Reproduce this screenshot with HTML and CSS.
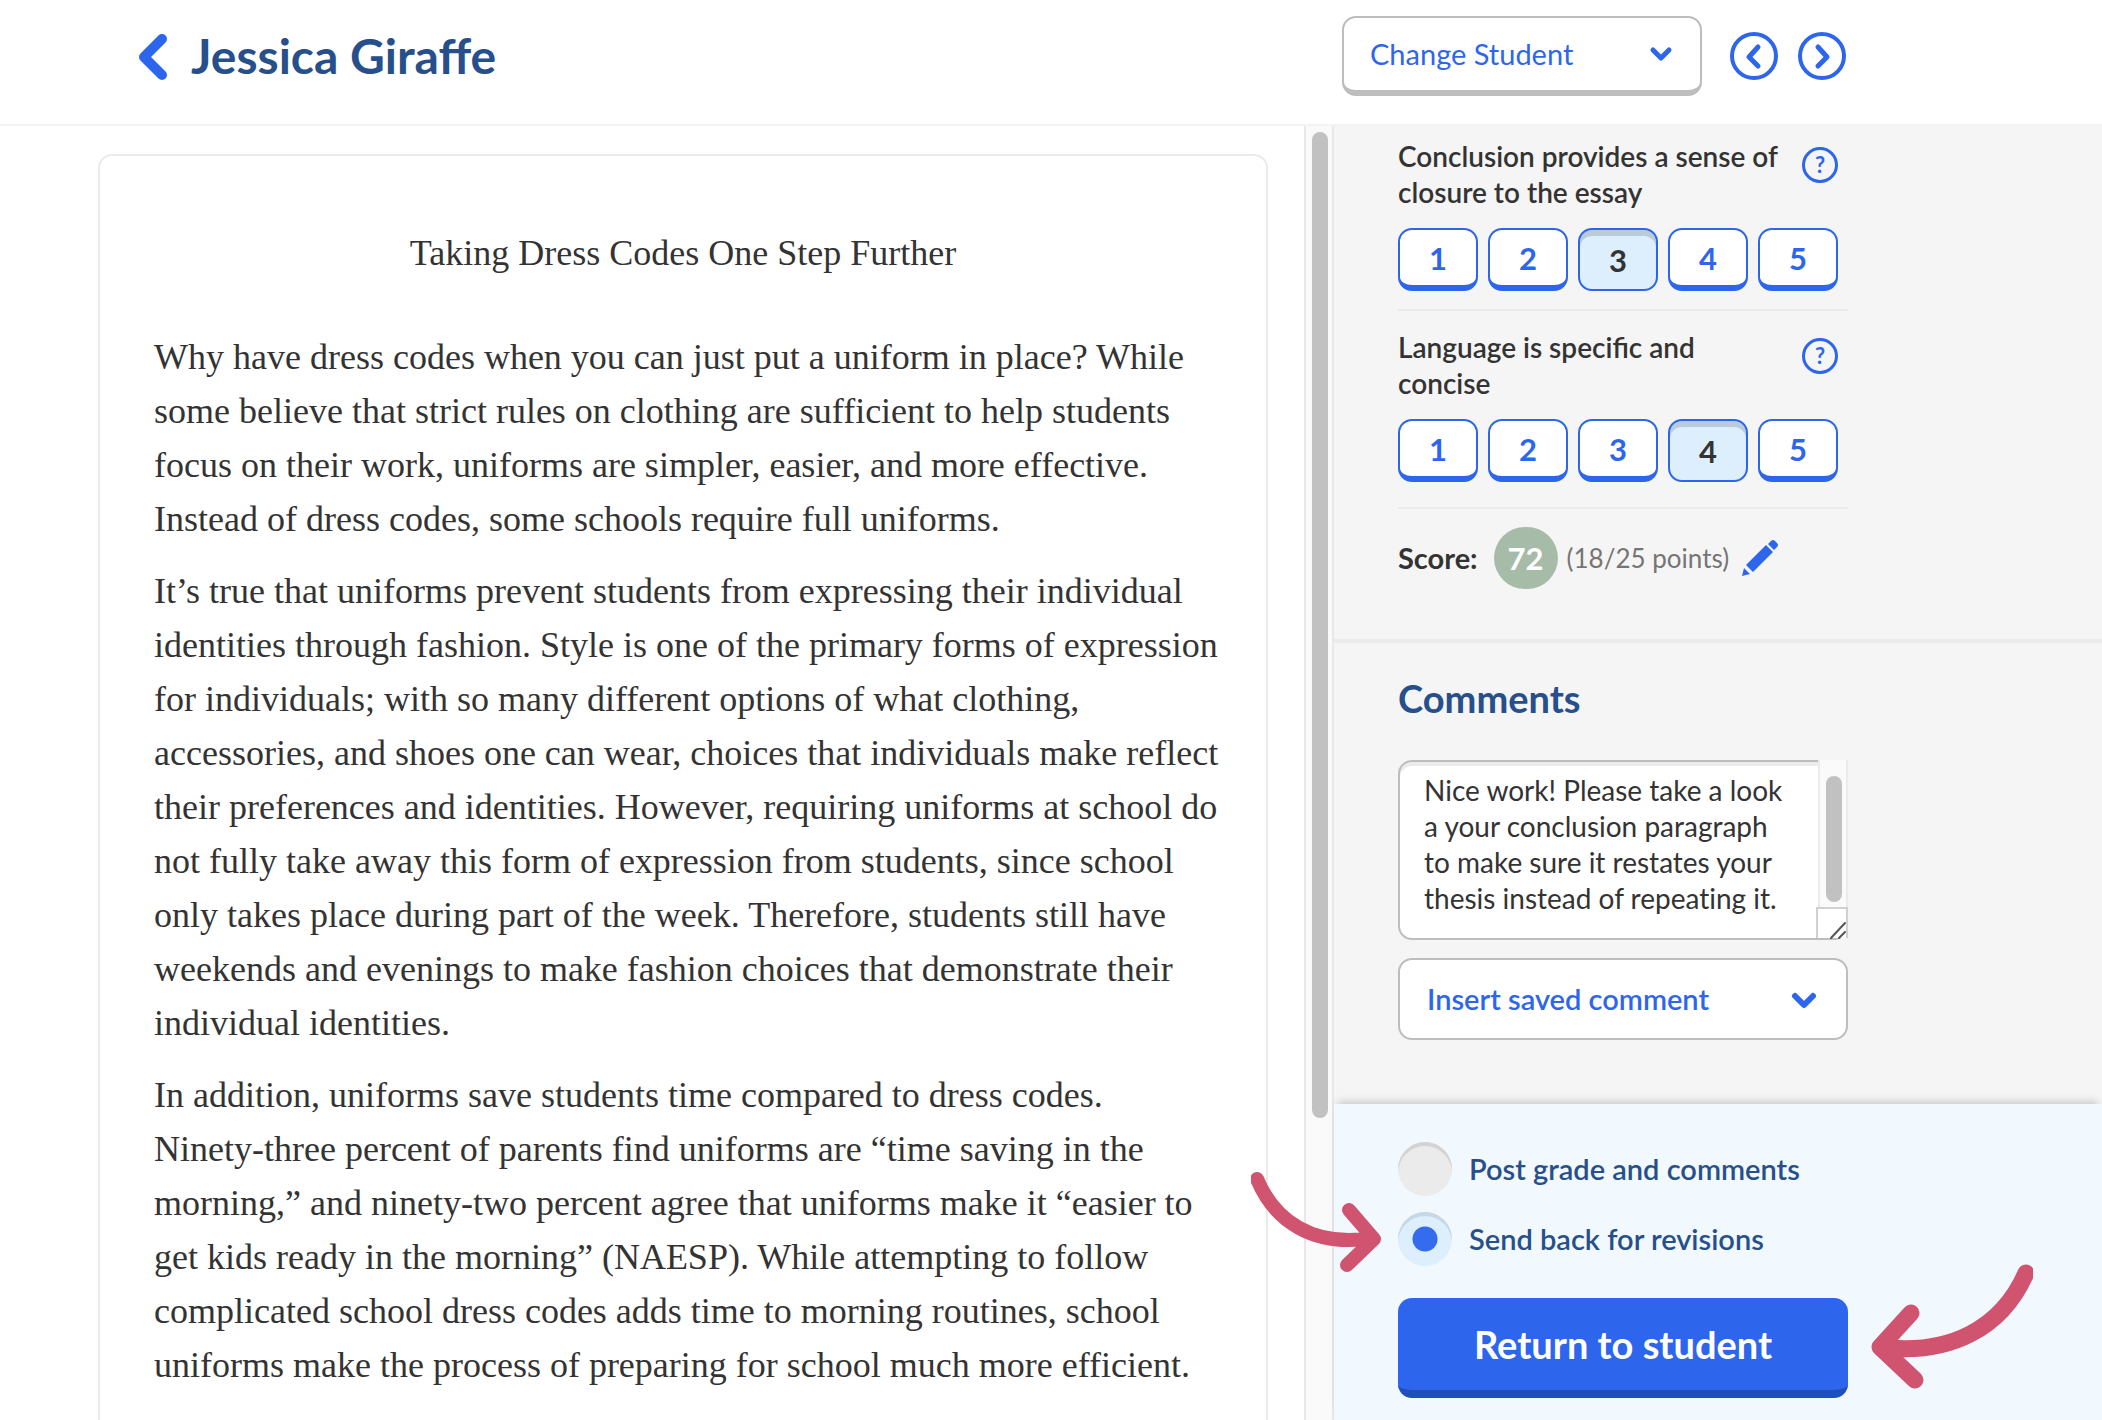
FILE: index.html
```html
<!DOCTYPE html>
<html lang="en">
<head>
  <meta charset="UTF-8" />
  <meta name="viewport" content="width=device-width, initial-scale=1.0"/>
  <title>Jessica Giraffe</title>
  <link rel="stylesheet" href="styles.css">
</head>
<body>
  <header class="top-bar">
    <a class="back" href="#" aria-label="Back">
      <svg width="28" height="46" viewBox="0 0 28 46"><path d="M23 5L5 23l18 18"/></svg>
    </a>
    <h1>Jessica Giraffe</h1>
    <div class="select-wrap student-select">
      <select aria-label="Change Student">
        <option>Change Student</option>
      </select>
      <svg class="chevron" width="24" height="16" viewBox="0 0 24 16"><path d="M4 4l8 8 8-8"/></svg>
    </div>
    <button class="nav-btn" aria-label="Previous student">
      <svg width="48" height="48" viewBox="0 0 48 48"><circle cx="24" cy="24" r="22"/><path d="M28 15l-9 10 9 9"/></svg>
    </button>
    <button class="nav-btn" aria-label="Next student">
      <svg width="48" height="48" viewBox="0 0 48 48"><circle cx="24" cy="24" r="22"/><path d="M20 15l9 10-9 9"/></svg>
    </button>
  </header>

  <div class="layout">
    <main class="essay-pane">
      <article class="essay">
        <h2>Taking Dress Codes One Step Further</h2>
        <p>Why have dress codes when you can just put a uniform in place? While some believe that strict rules on clothing are sufficient to help students focus on their work, uniforms are simpler, easier, and more effective. Instead of dress codes, some schools require full uniforms.</p>
        <p>It’s true that uniforms prevent students from expressing their individual identities through fashion. Style is one of the primary forms of expression for individuals; with so many different options of what clothing, accessories, and shoes one can wear, choices that individuals make reflect their preferences and identities. However, requiring uniforms at school do not fully take away this form of expression from students, since school only takes place during part of the week. Therefore, students still have weekends and evenings to make fashion choices that demonstrate their individual identities.</p>
        <p>In addition, uniforms save students time compared to dress codes. Ninety-three percent of parents find uniforms are “time saving in the morning,” and ninety-two percent agree that uniforms make it “easier to get kids ready in the morning” (NAESP). While attempting to follow complicated school dress codes adds time to morning routines, school uniforms make the process of preparing for school much more efficient.</p>
      </article>
    </main>
    <div class="scrollbar"><div class="thumb"></div></div>

    <aside class="sidebar">
      <section class="rubric">
        <div class="criterion">
          <div class="criterion-head">
            <span>Conclusion provides a sense of closure to the essay</span>
            <button class="help" aria-label="Help">?</button>
          </div>
          <div class="scores">
            <button>1</button>
            <button>2</button>
            <button class="selected">3</button>
            <button>4</button>
            <button>5</button>
          </div>
        </div>
        <div class="criterion">
          <div class="criterion-head">
            <span>Language is specific and concise</span>
            <button class="help" aria-label="Help">?</button>
          </div>
          <div class="scores">
            <button>1</button>
            <button>2</button>
            <button>3</button>
            <button class="selected">4</button>
            <button>5</button>
          </div>
        </div>
        <div class="total">
          <strong>Score:</strong>
          <span class="badge">72</span>
          <span class="points">(18/25 points)</span>
          <button class="edit" aria-label="Edit score">
            <svg width="36" height="36" viewBox="0 0 36 36"><path d="M0 36l2-8 6 6zM4 25L24 5l7 7-20 20zM26 4l3-3q2-2 4 0l2 2q2 2 0 4l-3 3z"/></svg>
          </button>
        </div>
      </section>

      <section class="comments">
        <h2>Comments</h2>
        <div class="comment-box">
          <textarea aria-label="Comments">Nice work! Please take a look a your conclusion paragraph to make sure it restates your thesis instead of repeating it.</textarea>
          <div class="mini-scroll"><div class="thumb"></div></div>
          <div class="resizer">
            <svg width="18" height="18" viewBox="0 0 18 18"><path d="M2 17L16 2M10 17l6-6"/></svg>
          </div>
        </div>
        <div class="select-wrap saved-select">
          <select aria-label="Insert saved comment">
            <option>Insert saved comment</option>
          </select>
          <svg class="chevron" width="26" height="18" viewBox="0 0 26 18"><path d="M4 4l9 9 9-9"/></svg>
        </div>
      </section>

      <section class="send">
        <label class="choice"><input type="radio" name="action"> Post grade and comments</label>
        <label class="choice"><input type="radio" name="action" checked> Send back for revisions</label>
        <button class="submit">Return to student</button>
        <svg class="arrow arrow-left" width="134" height="102" viewBox="0 0 134 102">
          <path d="M6 8C23 49 61 77 122 67M98 39l25 29-27 26"/>
        </svg>
        <svg class="arrow arrow-right" width="163" height="126" viewBox="0 0 163 126">
          <path d="M156 9C132 64 80 92 10 83M41 49L10 83l35 33"/>
        </svg>
      </section>
    </aside>
  </div>
</body>
</html>
```
FILE: styles.css
```css
:root {
  --blue: #2d66ec;
  --navy: #264f8b;
  --text: #333;
  --grey: #bdbdbd;
  --line: #ebebeb;
  --panel: #f5f5f5;
  --pale: #ddeefc;
  --red: #d0546f;
}

* {
  box-sizing: border-box;
}

body {
  margin: 0;
  height: 100vh;
  display: flex;
  flex-direction: column;
  overflow: hidden;
  font-family: Lato, 'Open Sans', sans-serif;
  font-size: 28px;
  line-height: 36px;
  color: var(--text);
  background: #fff;
}

button, select, textarea {
  font: inherit;
  margin: 0;
}

button {
  padding: 0;
  border: none;
  background: none;
  color: var(--blue);
  cursor: pointer;
}

svg {
  display: block;
  fill: none;
  stroke: var(--blue);
  stroke-linecap: round;
  stroke-linejoin: round;
}

.top-bar {
  flex: none;
  display: flex;
  align-items: flex-start;
  padding: 16px 256px 28px 139px;
  border-bottom: 2px solid #f3f3f3;
}

.back {
  padding-top: 18px;
}

.back svg {
  stroke-width: 10;
}

.top-bar h1 {
  flex: 1;
  margin: 12px 0 0 24px;
  font-size: 48px;
  line-height: 56px;
  color: var(--navy);
}

.select-wrap {
  position: relative;
}

.select-wrap select {
  width: 100%;
  appearance: none;
  border: 2px solid var(--grey);
  border-radius: 14px;
  background: #fff;
  color: var(--blue);
  font-size: 29px;
}

.chevron {
  position: absolute;
  pointer-events: none;
}

.student-select {
  width: 360px;
}

.student-select select {
  height: 80px;
  padding: 0 26px;
  border-bottom-width: 6px;
}

.student-select .chevron {
  top: 30px;
  right: 29px;
  stroke-width: 5;
}

.nav-btn {
  margin: 16px 0 0 20px;
}

.nav-btn:first-of-type {
  margin-left: 28px;
}

.nav-btn svg {
  stroke-width: 4;
}

.nav-btn path {
  stroke-width: 5;
}

.layout {
  flex: 1;
  min-height: 0;
  display: flex;
}

.essay-pane {
  flex: 1;
  min-width: 0;
  padding: 28px 36px 0 98px;
  overflow: hidden;
}

.essay {
  padding: 70px 54px 54px 54px;
  border: 2px solid var(--line);
  border-radius: 14px;
  font-family: Georgia, 'Liberation Serif', serif;
  font-size: 36px;
  line-height: 54px;
}

.essay h2 {
  margin: 0 0 50px;
  font-size: inherit;
  font-weight: normal;
  text-align: center;
}

.essay p {
  margin: 0 -8px 18px 0;
}

.scrollbar {
  flex: none;
  width: 30px;
  padding: 6px 5px 0 6px;
  border: solid #e8e8e8;
  border-width: 0 2px;
  background: #fafafa;
}

.thumb {
  width: 16px;
  border-radius: 8px;
  background: #c1c1c1;
}

.scrollbar .thumb {
  height: 986px;
}

.sidebar {
  flex: none;
  width: 768px;
  display: flex;
  flex-direction: column;
  background: var(--panel);
}

.rubric {
  padding: 12px 254px 50px 64px;
  border-bottom: 4px solid var(--line);
}

.criterion {
  padding-bottom: 18px;
  margin-bottom: 18px;
  border-bottom: 2px solid var(--line);
}

.criterion + .criterion {
  padding-bottom: 25px;
}

.criterion-head {
  width: 440px;
  display: flex;
  align-items: flex-start;
  gap: 10px;
  margin-bottom: 18px;
}

.criterion-head span {
  flex: 1;
  font-weight: 600;
}

.help {
  flex: none;
  width: 36px;
  height: 36px;
  margin-top: 9px;
  border: 3px solid var(--blue);
  border-radius: 50%;
  font-size: 22px;
  line-height: 28px;
  font-weight: bold;
}

.scores {
  display: flex;
  gap: 10px;
}

.scores button {
  width: 80px;
  height: 63px;
  border: 2px solid var(--blue);
  border-bottom-width: 6px;
  border-radius: 14px;
  background: #fff;
  font-size: 31px;
  font-weight: bold;
}

.scores .selected {
  border-bottom-width: 2px;
  background: var(--pale);
  box-shadow: inset 0 6px 0 #bccbd9;
  color: var(--text);
}

.total {
  display: flex;
  align-items: center;
}

.total strong {
  font-size: 29px;
}

.badge {
  width: 64px;
  margin: 0 9px 0 16px;
  border-radius: 31px;
  background: #a7bca8;
  color: #fff;
  font-size: 31px;
  line-height: 62px;
  font-weight: bold;
  text-align: center;
}

.points {
  margin-right: 13px;
  font-size: 26px;
  color: #757575;
}

.edit svg {
  fill: var(--blue);
  stroke: none;
}

.comments {
  padding: 31px 254px 64px 64px;
}

.comments h2 {
  margin: 0 0 38px;
  font-size: 38px;
  line-height: 48px;
  color: var(--navy);
}

.comment-box {
  position: relative;
  height: 180px;
  margin-bottom: 18px;
}

.comment-box textarea {
  display: block;
  width: 100%;
  height: 100%;
  padding: 10px 50px 10px 24px;
  border: 2px solid var(--grey);
  border-radius: 14px;
  background: #fff;
  box-shadow: inset 0 4px 0 #ebebeb;
  color: var(--text);
  font-variant-ligatures: none;
  overflow: hidden;
  resize: none;
}

.mini-scroll {
  position: absolute;
  top: 0;
  right: 0;
  width: 30px;
  height: 148px;
  padding: 16px 6px 0;
  border: solid #ebebeb;
  border-width: 0 2px;
  background: #fafafa;
}

.mini-scroll .thumb {
  height: 126px;
}

.resizer {
  position: absolute;
  right: 0;
  bottom: 2px;
  width: 32px;
  height: 31px;
  padding: 12px 0 0 11px;
  border: 2px solid #d0d0d0;
  border-bottom: none;
  background: #fff;
}

.resizer svg {
  stroke: #555;
  stroke-width: 2;
}

.saved-select select {
  height: 82px;
  padding: 0 27px;
  font-weight: 600;
}

.saved-select .chevron {
  top: 34px;
  right: 31px;
  stroke-width: 6;
}

.send {
  position: relative;
  flex: 1;
  padding: 38px 254px 22px 64px;
  background: #f1f8fe;
  box-shadow: 0 -6px 8px -4px rgba(0, 0, 0, 0.2);
}

.choice {
  display: flex;
  align-items: center;
  gap: 17px;
  margin-bottom: 16px;
  font-size: 29px;
  font-weight: 600;
  color: var(--navy);
}

.choice input {
  appearance: none;
  width: 54px;
  height: 54px;
  margin: 0;
  border-radius: 50%;
  background: #ebebeb;
  box-shadow: inset 0 4px 0 #d3d3d3;
}

.choice input:checked {
  background: radial-gradient(circle, #356bef 12px, var(--pale) 13px);
  box-shadow: inset 0 4px 0 #c6d7e5;
}

.submit {
  width: 100%;
  height: 100px;
  margin-top: 16px;
  border-bottom: 8px solid #1f4fbb;
  border-radius: 14px;
  background: var(--blue);
  color: #fff;
  font-size: 38px;
  font-weight: bold;
}

/* hand-drawn pointers over the form */
.arrow {
  position: absolute;
  stroke: var(--red);
  pointer-events: none;
}

.arrow-left {
  left: -83px;
  top: 67px;
  stroke-width: 14;
}

.arrow-right {
  left: 536px;
  top: 160px;
  stroke-width: 17;
}
```
